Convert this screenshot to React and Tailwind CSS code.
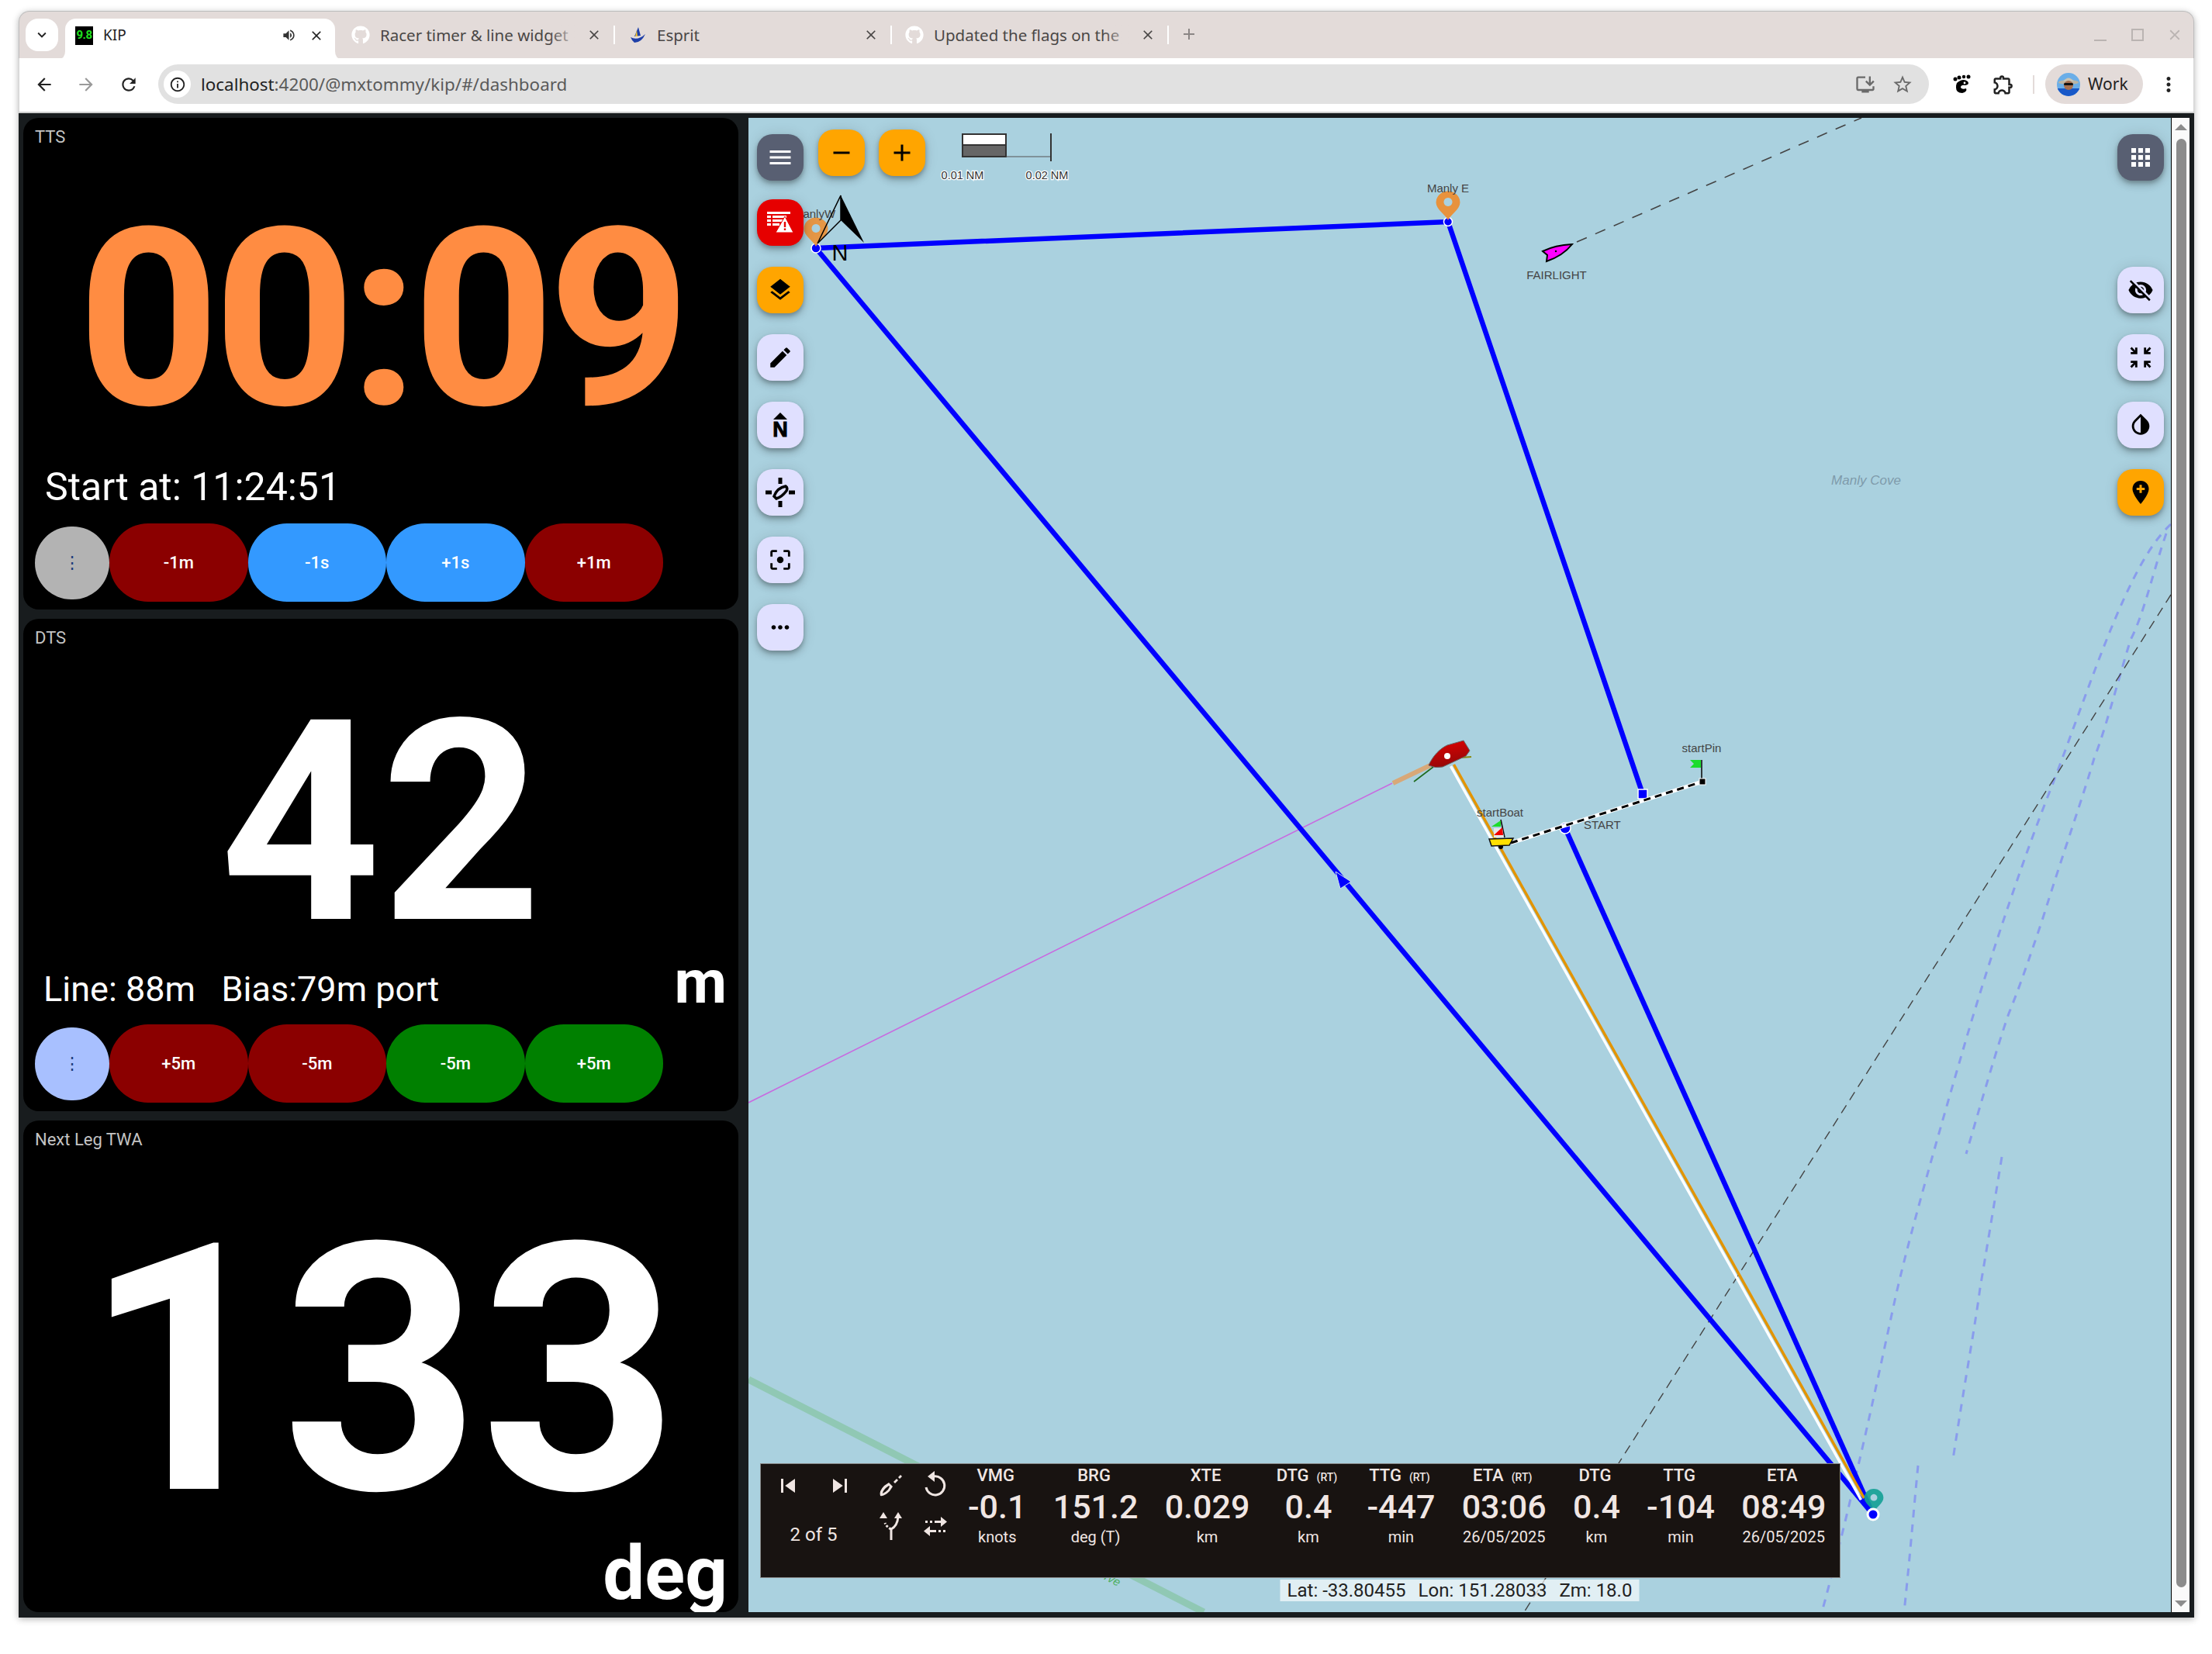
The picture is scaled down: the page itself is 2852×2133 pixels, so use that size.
import React from "react";
import {
  MdMenu, MdLayers, MdEdit, MdFilterCenterFocus, MdMoreHoriz, MdApps, MdVisibilityOff, MdZoomInMap,
  MdInvertColors, MdRemove, MdAdd, MdSkipPrevious, MdSkipNext, MdClose, MdArrowBack, MdArrowForward,
  MdRefresh, MdInfoOutline, MdStarBorder, MdInstallDesktop, MdMoreVert, MdKeyboardArrowDown, MdVolumeUp,
  MdOutlineExtension,
} from "react-icons/md";
import { FaGithub } from "react-icons/fa";

const ROBOTO = "font-['Roboto',sans-serif]";
const CHROME = "font-['Noto_Sans',sans-serif]";

function Tab({ icon, title, fade, sep = true }) {
  return (
    <div className="flex h-[51px] w-[357px] items-center pb-[9px]">
      <div className="ml-[17px] flex w-[24px] justify-center">{icon}</div>
      <div className="relative ml-[13px] w-[258px] overflow-hidden whitespace-nowrap text-[20.5px] text-[#4a4746]">
        {title}
        {fade && <div className="absolute inset-y-0 right-0 w-[40px] bg-gradient-to-r from-transparent to-[#e3dbd9]" />}
      </div>
      <MdClose className="ml-[8px] text-[#4a4746]" size={20} />
      <div className="ml-auto h-[24px] w-[2px] bg-white" style={{ visibility: sep ? "visible" : "hidden" }} />
    </div>
  );
}

function EspritIcon() {
  return (
    <svg width="24" height="24" viewBox="0 0 24 24">
      <path d="M13 2 L16 13 L8 14 Z" fill="#1f3fa8" />
      <path d="M11 6 L9 14 L12 14 Z" fill="#f2c230" />
      <path d="M3 15 Q12 20 22 11 Q17 22 8 22 Q5 20 3 15Z" fill="#1f3fa8" />
    </svg>
  );
}

function Avatar() {
  return (
    <svg width="30" height="30" viewBox="0 0 30 30" className="rounded-full">
      <rect width="30" height="30" fill="#6aaee8" />
      <rect y="20" width="30" height="10" fill="#1858c8" />
      <ellipse cx="15" cy="12" rx="13" ry="3" fill="#b9b4a4" />
      <path d="M8 11 Q15 2 22 11Z" fill="#c9c4b4" />
      <circle cx="15" cy="16" r="6" fill="#a87050" />
      <rect x="9" y="13" width="12" height="3" rx="1.5" fill="#111" />
    </svg>
  );
}

function ChromeBar() {
  return (
    <>
      <div className="relative flex h-[61px] shrink-0 items-start rounded-t-[14px] border-x border-t border-[#bdbdbd] bg-[#e3dbd9] pt-[9px]">
        <div className="ml-[8px] flex h-[42px] w-[42px] items-center justify-center rounded-[16px] bg-white">
          <MdKeyboardArrowDown size={22} className="text-[#222]" />
        </div>
        <div className="relative ml-[9px] flex h-[52px] w-[348px] items-center rounded-t-[14px] bg-white pb-[9px]">
          <svg className="absolute bottom-0 left-[-9px]" width="9" height="10" viewBox="0 0 9 10"><path d="M9 0 V10 H0 Q9 10 9 0Z" fill="#fff" /></svg>
          <svg className="absolute bottom-0 right-[-9px]" width="9" height="10" viewBox="0 0 9 10"><path d="M0 0 V10 H9 Q0 10 0 0Z" fill="#fff" /></svg>
          <div className={`ml-[13px] flex h-[24px] w-[23px] flex-col items-center justify-center bg-black text-[15px] font-bold leading-none tracking-[-0.5px] text-[#1fe01f] ${ROBOTO}`}>9.8</div>
          <span className={`ml-[13px] text-[19px] text-[#222] ${CHROME}`}>KIP</span>
          <MdVolumeUp size={19} className="ml-auto text-[#333]" />
          <MdClose size={20} className="ml-[16px] mr-[14px] text-[#222]" />
        </div>
        <div className={`ml-[4px] flex items-start ${CHROME}`}>
          <Tab icon={<FaGithub size={24} className="text-white" />} title="Racer timer & line widget" fade />
          <Tab icon={<EspritIcon />} title="Esprit" />
          <Tab icon={<FaGithub size={24} className="text-white" />} title="Updated the flags on the" fade />
        </div>
        <MdAdd size={24} className="ml-[14px] mt-[8px] text-[#8b8685]" />
        <div className="ml-auto mr-[13px] mt-[10px] flex items-center text-[#bab4b2]">
          <div className="mt-[14px] h-[2px] w-[16px] bg-[#bab4b2]" />
          <div className="ml-[32px] h-[16px] w-[16px] border-2 border-[#bab4b2]" />
          <MdClose size={22} className="ml-[29px]" />
        </div>
      </div>
      <div className="flex h-[69px] shrink-0 items-center border-x border-[#d5d5d5] bg-white pb-[2px] text-[#222]">
        <MdArrowBack size={26} className="ml-[19px]" />
        <MdArrowForward size={26} className="ml-[28px] text-[#9a9a9a]" />
        <MdRefresh size={26} className="ml-[29px]" />
        <div className={`ml-[25px] flex h-[51px] w-[2283px] items-center rounded-full bg-[#e1e1e1] ${CHROME}`}>
          <div className="ml-[7px] flex h-[35px] w-[35px] items-center justify-center rounded-full bg-white">
            <MdInfoOutline size={22} className="text-[#222]" />
          </div>
          <span className="ml-[13px] text-[22.4px] text-[#222]">localhost<span className="text-[#5a5a5a]">:4200/@mxtommy/kip/#/dashboard</span></span>
          <MdInstallDesktop size={28} className="ml-auto text-[#6a6a6a]" />
          <MdStarBorder size={28} className="ml-[20px] mr-[20px] text-[#6a6a6a]" />
        </div>
        <svg width="24" height="26" viewBox="0 0 24 26" className="ml-[30px]">
          <circle cx="4" cy="6" r="2.5" /><circle cx="9" cy="4" r="2.5" /><circle cx="15" cy="3" r="2.2" /><circle cx="21" cy="3" r="2.5" />
          <path d="M6 11 Q14 4 20 9 Q23 13 17 14 Q11 13 11 17 Q13 20 18 18 Q20 22 13 24 Q5 24 5 17 Q5 13 6 11Z" />
          <circle cx="16" cy="11" r="1.4" fill="#fff" />
        </svg>
        <MdOutlineExtension size={30} className="ml-[27px] text-[#222]" />
        <div className="ml-[23px] h-[24px] w-[2px] bg-[#e3dbd9]" />
        <div className={`ml-[14px] flex h-[51px] w-[126px] items-center rounded-full bg-[#e3dbd9] pl-[15px] ${CHROME}`}>
          <Avatar />
          <span className="ml-[10px] text-[21px] text-[#222]">Work</span>
        </div>
        <MdMoreVert size={30} className="ml-[18px] text-[#222]" />
      </div>
      <div className="h-[2px] shrink-0 bg-[#cfcfcf]" />
    </>
  );
}

function Pill({ bg, children }) {
  return (
    <div className={`flex h-[101px] w-[178.5px] shrink-0 items-center justify-center rounded-[50px] text-[22px] font-medium text-white ${bg}`}>
      {children}
    </div>
  );
}

function Dot({ bg }) {
  return (
    <div className={`flex h-[94px] w-[96px] shrink-0 items-center justify-center rounded-full text-[22px] leading-none text-[#1d3f7c] ${bg}`}>⋮</div>
  );
}

function Card({ title, children }) {
  return (
    <div className={`relative flex min-h-0 flex-1 flex-col overflow-hidden rounded-[20px] bg-black text-white ${ROBOTO}`}>
      <div className="h-[36px] shrink-0 pl-[15px] pt-[13px] text-[22px] leading-[24px] text-[#c4c4c4]">{title}</div>
      {children}
    </div>
  );
}

function LeftPanels() {
  return (
    <div className="ml-[6px] flex w-[922px] shrink-0 flex-col gap-[12px]">
      <Card title="TTS">
        <div className="flex h-[422px] shrink-0 items-center justify-center pt-[26px]">
          <span className="whitespace-nowrap text-[320px] font-bold leading-[0.78] tracking-[-8.5px] text-[#ff8c42]">00:09</span>
        </div>
        <div className="h-[36px] pl-[28px] text-[50px] leading-[36px]">Start at: 11:24:51</div>
        <div className="mb-[11px] mt-[29px] flex items-center pl-[15px]">
          <Dot bg="bg-[#b3b3b3]" />
          <Pill bg="bg-[#8b0000]">-1m</Pill>
          <Pill bg="bg-[#3399ff]">-1s</Pill>
          <Pill bg="bg-[#3399ff]">+1s</Pill>
          <Pill bg="bg-[#8b0000]">+1m</Pill>
        </div>
      </Card>
      <Card title="DTS">
        <div className="flex h-[424px] shrink-0 items-center justify-center pt-[30px]">
          <span className="text-[362px] font-bold leading-[0.78]">42</span>
        </div>
        <div className="h-[36px] whitespace-pre pl-[26px] text-[45px] leading-[36px]">Line: 88m   Bias:79m port</div>
        <div className="absolute right-[15px] top-[430px] text-[78px] font-bold leading-none">m</div>
        <div className="mb-[11px] mt-[27px] flex items-center pl-[15px]">
          <Dot bg="bg-[#a8c0ff]" />
          <Pill bg="bg-[#8b0000]">+5m</Pill>
          <Pill bg="bg-[#8b0000]">-5m</Pill>
          <Pill bg="bg-[#008000]">-5m</Pill>
          <Pill bg="bg-[#008000]">+5m</Pill>
        </div>
      </Card>
      <Card title="Next Leg TWA">
        <div className="flex h-[500px] shrink-0 items-center justify-center pt-[74px]">
          <span className="text-[446px] font-bold leading-[0.78]">133</span>
        </div>
        <div className="pr-[14px] text-right text-[96px] font-bold leading-none">deg</div>
      </Card>
    </div>
  );
}

function Pin({ x, y, color, opacity = 1 }) {
  return (
    <g transform={`translate(${x} ${y})`} opacity={opacity}>
      <path d="M0 0 C-3 -7 -15.5 -14 -15.5 -23 A15.5 14.5 0 1 1 15.5 -23 C15.5 -14 3 -7 0 0Z M0 -29 A5.5 5.5 0 1 0 0.01 -29Z" fill={color} fillRule="evenodd" />
    </g>
  );
}

function MapCanvas() {
  const label = { fontFamily: "'Liberation Sans',sans-serif", fontSize: 15, fill: "#444" };
  return (
    <svg className="absolute inset-0" width="1834" height="1927" viewBox="965 152 1834 1927">
      {/* reserve band */}
      <path d="M965 1779 L1552 2079" stroke="#90c8b4" strokeWidth="9" fill="none" />
      <text x="1392" y="2020" transform="rotate(28 1392 2020)" style={{ fontFamily: "'Liberation Sans',sans-serif", fontSize: 15, fontStyle: "italic", fill: "#4caf62" }}>Reserve</text>
      <text x="2406" y="625" textAnchor="middle" style={{ fontFamily: "'Liberation Sans',sans-serif", fontSize: 17, fontStyle: "italic", fill: "#7f9bab" }}>Manly Cove</text>

      {/* depth contours */}
      <g fill="none" stroke="#7b86f2" strokeOpacity="0.7" strokeWidth="3" strokeDasharray="10 9">
        <path d="M2799 676 C2745 725 2700 870 2647 1010 C2615 1090 2570 1220 2533 1347 C2500 1460 2460 1600 2443 1677 C2425 1760 2410 1830 2395 1894 C2380 1960 2365 2020 2349 2079" />
        <path d="M2793 688 C2775 740 2765 790 2747 825 C2730 880 2715 940 2700 978 C2685 1030 2660 1100 2633 1187 C2615 1240 2605 1270 2590 1307 C2575 1350 2555 1420 2535 1488" />
        <path d="M2581 1492 C2570 1560 2560 1620 2553 1661 C2545 1720 2535 1770 2518 1882" />
        <path d="M2473 1890 C2470 1920 2467 1955 2464 1987 C2461 2020 2458 2050 2455 2079" />
      </g>

      {/* AIS and layline vectors */}
      <path d="M2033 312 L2400 152" stroke="#444" strokeWidth="1.6" strokeDasharray="14 12" fill="none" />
      <path d="M2799 767 L1965 2079" stroke="#444" strokeWidth="1.4" strokeDasharray="12 8" fill="none" />

      {/* heading / bearing line */}
      <path d="M965 1422 L1795 1010" stroke="#c86ae0" strokeWidth="1.6" fill="none" />
      <path d="M1796 1010 L1844 987" stroke="#d8a878" strokeWidth="6" fill="none" />
      <path d="M1823 1008 L1848 989" stroke="#1e6a1e" strokeWidth="1.6" fill="none" />
      <path d="M1883 977 L1897 976" stroke="#8a8a10" strokeWidth="2" fill="none" />

      {/* route */}
      <g fill="none" stroke="#0000ff" strokeWidth="6.5">
        <path d="M1052 320 L1867 286 L2118 1024" />
        <path d="M2018 1068 L2415 1953" />
        <path d="M1052 320 L2415 1953" />
      </g>
      <path d="M1873 987 L2402 1933" stroke="#fff" strokeWidth="3.5" fill="none" transform="translate(-2.5 1.2)" />
      <path d="M1873 987 L2402 1933" stroke="#e39400" strokeWidth="3.5" fill="none" transform="translate(1.5 -1)" />
      <polygon points="1722,1124 1742,1137 1728,1146" fill="#0000ff" stroke="#cfe3ee" strokeWidth="1" />

      {/* teal pin */}
      <g transform="translate(2416 1950) scale(0.8)"><Pin x={0} y={0} color="#13a095" opacity={0.9} /></g>

      <circle cx="2018" cy="1068" r="7" fill="#0000ff" stroke="#fff" strokeWidth="1.5" />
      <rect x="2112" y="1018" width="12" height="12" fill="#0000ff" stroke="#fff" strokeWidth="1.5" />

      {/* start line */}
      <path d="M1948 1087 L2195 1008" stroke="#fff" strokeWidth="5" fill="none" />
      <path d="M1948 1087 L2195 1008" stroke="#000" strokeWidth="3" strokeDasharray="9 6" fill="none" />

      {/* pin end */}
      <path d="M2194 980 V1008" stroke="#111" strokeWidth="1.6" />
      <polygon points="2193,980 2179,980 2184,985 2179,990 2193,990" fill="#1cdc2c" />
      <rect x="2191" y="1004" width="8" height="8" fill="#000" stroke="#fff" strokeWidth="1" />
      <text x="2194" y="970" textAnchor="middle" style={label}>startPin</text>

      {/* boat end */}
      <circle cx="1935" cy="1092" r="3" fill="#000" />
      <path d="M1935 1057 L1940 1080" stroke="#111" strokeWidth="1.6" />
      <polygon points="1935,1058 1923,1066 1935,1066" fill="#1cdc2c" />
      <polygon points="1926,1068 1937,1068 1939,1080 1926,1080" fill="#e8e8e8" />
      <polygon points="1937,1067 1926,1077 1938,1077" fill="#f00000" />
      <polygon points="1920,1082 1951,1081 1946,1090 1923,1091" fill="#ffe000" stroke="#111" strokeWidth="1.5" />
      <text x="1934" y="1053" textAnchor="middle" style={label}>startBoat</text>
      <text x="2042" y="1069" style={label}>START</text>

      {/* self boat */}
      <defs>
        <linearGradient id="hull" x1="0" y1="0" x2="0.3" y2="1">
          <stop offset="0" stopColor="#e40000" />
          <stop offset="1" stopColor="#960808" />
        </linearGradient>
      </defs>
      <path d="M1842 987 C1847 975 1857 965 1866 961 L1887 955 L1895 968 L1890 975 L1860 989 Q1850 991 1842 987Z" fill="url(#hull)" stroke="#666" strokeWidth="1" />
      <circle cx="1866" cy="975" r="4" fill="#fff" />

      {/* waypoints: the marker pins sit over their route nodes */}
      <circle cx="1052" cy="320" r="6" fill="#0000ff" stroke="#fff" strokeWidth="1.5" />
      <circle cx="1867" cy="286" r="5.5" fill="#0000ff" stroke="#fff" strokeWidth="1.5" />
      <Pin x={1052} y={318} color="#e8923c" opacity={0.95} />
      <Pin x={1867} y={284} color="#e8923c" />
      <circle cx="2415" cy="1953" r="7" fill="#0000ff" stroke="#fff" strokeWidth="3" />
      <text x="1867" y="248" textAnchor="middle" style={label}>Manly E</text>
      <text x="1050" y="281" textAnchor="middle" style={label}>ManlyW</text>

      {/* AIS vessel */}
      <path d="M2027 315 Q2005 316 1989 324 L1995 329 L1994 337 Q2015 330 2027 315Z" fill="#ff00ff" stroke="#000" strokeWidth="2" />
      <circle cx="2006" cy="324" r="1.2" fill="#000" />
      <text x="2007" y="360" textAnchor="middle" style={label}>FAIRLIGHT</text>

      {/* north arrow */}
      <polygon points="1084,252 1054,314 1084,284" fill="none" stroke="#000" strokeWidth="1.5" />
      <polygon points="1084,252 1114,313 1084,284" fill="#000" />
      <text x="1083" y="336" textAnchor="middle" style={{ fontFamily: "'Liberation Sans',sans-serif", fontSize: 29, fill: "#000" }}>N</text>

      {/* scale line */}
      <rect x="1241" y="173" width="56" height="14" fill="#fff" stroke="#333" strokeWidth="2" />
      <rect x="1241" y="187" width="56" height="15" fill="#666" stroke="#333" strokeWidth="2" />
      <path d="M1297 202 H1355" stroke="#555" strokeWidth="1.2" />
      <path d="M1355 172 V208" stroke="#333" strokeWidth="2" />
      <g style={{ fontFamily: "'Liberation Sans',sans-serif", fontSize: 14.5, fill: "#333", paintOrder: "stroke", stroke: "#fff", strokeWidth: 2.5 }}>
        <text x="1241" y="231" textAnchor="middle">0.01 NM</text>
        <text x="1350" y="231" textAnchor="middle">0.02 NM</text>
      </g>
    </svg>
  );
}

const FAB_SHADOW = "shadow-[0_3px_5px_rgba(0,0,0,0.2),0_6px_10px_rgba(0,0,0,0.14),0_1px_18px_rgba(0,0,0,0.12)]";

function Fab({ bg = "bg-[#e0e0ff]", className = "", children }) {
  return (
    <div className={`flex h-[60px] w-[60px] shrink-0 items-center justify-center rounded-[20px] text-black ${FAB_SHADOW} ${bg} ${className}`}>
      {children}
    </div>
  );
}

function LeftFabs() {
  return (
    <div className="absolute left-[11px] top-[21px] flex flex-col gap-[27px]">
      <Fab bg="bg-[#585f72]" className="mb-[-3px] text-white"><MdMenu size={36} /></Fab>
      <Fab bg="bg-[#e60000]">
        <svg width="36" height="30" viewBox="0 0 36 30" fill="#fff">
          <rect x="1" y="1" width="30" height="3" />
          <rect x="1" y="6" width="5" height="3" /><rect x="8" y="6" width="18" height="3" />
          <rect x="1" y="11" width="5" height="3" /><rect x="8" y="11" width="14" height="3" />
          <rect x="1" y="16" width="5" height="3" /><rect x="8" y="16" width="9" height="3" />
          <path d="M24 7 L35 28 H12Z" stroke="#e60000" strokeWidth="1" />
          <rect x="22.8" y="14" width="2.4" height="7" fill="#e60000" />
          <rect x="22.8" y="22.5" width="2.4" height="2.4" fill="#e60000" />
        </svg>
      </Fab>
      <Fab bg="bg-[#ffa500]"><MdLayers size={34} /></Fab>
      <Fab><MdEdit size={34} /></Fab>
      <Fab>
        <svg width="36" height="36" viewBox="0 0 36 36">
          <polygon points="18,2 27,11 9,11" fill="#000" />
          <text x="18" y="33" textAnchor="middle" stroke="#000" strokeWidth="1" style={{ fontFamily: "'Liberation Sans',sans-serif", fontSize: 27, fontWeight: 700 }}>N</text>
        </svg>
      </Fab>
      <Fab>
        <svg width="40" height="40" viewBox="0 0 40 40">
          <path d="M20 1 V9 M20 31 V39 M1 20 H9 M31 20 H39" stroke="#000" strokeWidth="5" />
          <path d="M12 25 Q16 14 27 12 Q30 14 28 18 Q22 26 15 28Z" fill="#e0e0ff" stroke="#000" strokeWidth="3.5" />
        </svg>
      </Fab>
      <Fab><MdFilterCenterFocus size={34} /></Fab>
      <Fab><MdMoreHoriz size={34} /></Fab>
    </div>
  );
}

function RightFabs() {
  return (
    <div className="absolute right-[9px] top-[21px] flex flex-col gap-[27px]">
      <Fab bg="bg-[#585f72]" className="mb-[84px] text-white"><MdApps size={36} /></Fab>
      <Fab><MdVisibilityOff size={34} /></Fab>
      <Fab><MdZoomInMap size={34} /></Fab>
      <Fab><MdInvertColors size={34} /></Fab>
      <Fab bg="bg-[#ffa500]">
        <svg width="36" height="36" viewBox="0 0 24 24">
          <path d="M12 2C8 2 5 5 5 9c0 5 7 13 7 13s7-8 7-13c0-4-3-7-7-7z" fill="#000" />
          <path d="M11 5.5h2V8h2.5v2H13v2.5h-2V10H8.5V8H11z" fill="#ffa500" />
        </svg>
      </Fab>
    </div>
  );
}

function Metric({ head, rt, value, unit }) {
  return (
    <div className="flex shrink-0 flex-col items-center">
      <div className="flex h-[28px] items-baseline whitespace-nowrap pr-[4px] pt-[2px] text-[22px] font-medium leading-[26px]">
        {head}
        {rt && <span className="ml-[10px] text-[14px]">(RT)</span>}
      </div>
      <div className="mt-[5px] text-[43px] font-medium leading-[44px]">{value}</div>
      <div className="mt-[4px] text-[20px] leading-[26px]">{unit}</div>
    </div>
  );
}

function RoutePanel() {
  return (
    <div className={`absolute left-[15px] top-[1735px] flex h-[148px] w-[1393px] border border-[#888] bg-[#181311] text-[#f0e6e3] ${ROBOTO}`}>
      <div className="flex w-[136px] shrink-0 flex-col items-center pt-[10px]">
        <div className="flex gap-[31px]">
          <MdSkipPrevious size={36} />
          <MdSkipNext size={36} />
        </div>
        <div className="mt-[31px] text-[24px] leading-[28px]">2 of 5</div>
      </div>
      <div className="grid h-[110px] w-[131px] shrink-0 grid-cols-[57px_57px] grid-rows-[54px_54px] items-center justify-items-center pl-[3px]">
        <svg width="36" height="36" viewBox="0 0 36 36" fill="#f0e6e3">
          <path d="M4 32 Q2 26 9 19 L15 15 L20 20 L16 26 Q9 33 4 32Z M7 29 Q10 28 14 24 L16 20 L15 19 L11 22 Q7 26 7 29Z" fillRule="evenodd" />
          <path d="M21 14 L25 10 L27 12 L23 16Z M27 8 L30 5 L32 7 L29 10Z" />
        </svg>
        <svg width="34" height="40" viewBox="0 0 34 40" fill="none" stroke="#f0e6e3" strokeWidth="3">
          <path d="M15 9 A12 12 0 1 1 5 23" />
          <polygon points="16,2 16,16 7,9" fill="#f0e6e3" stroke="none" />
        </svg>
        <svg width="30" height="38" viewBox="0 0 30 38" fill="none" stroke="#f0e6e3" strokeWidth="3">
          <path d="M15 36 V22 Q23 18 24 6" />
          <path d="M15 22 Q9 19 7 14" strokeDasharray="3 2" />
          <polygon points="24,0 29,8 19,8" fill="#f0e6e3" stroke="none" />
          <polygon points="5,0 10,8 0,8" fill="#f0e6e3" stroke="none" />
        </svg>
        <svg width="32" height="30" viewBox="0 0 32 30" fill="#f0e6e3">
          <rect x="3" y="7" width="3" height="3" /><rect x="9" y="7" width="3" height="3" /><path d="M15 7 H23 V2 L31 8.5 L23 15 V10 H15Z" />
          <path d="M17 19 H9 V14 L1 20.5 L9 27 V22 H17Z" /><rect x="20" y="19" width="3" height="3" /><rect x="26" y="19" width="3" height="3" />
        </svg>
      </div>
      <div className="flex items-start gap-[34.25px]">
        <Metric head="VMG" value="-0.1" unit="knots" />
        <Metric head="BRG" value="151.2" unit="deg (T)" />
        <Metric head="XTE" value="0.029" unit="km" />
        <Metric head="DTG" rt value="0.4" unit="km" />
        <Metric head="TTG" rt value="-447" unit="min" />
        <Metric head="ETA" rt value="03:06" unit="26/05/2025" />
        <Metric head="DTG" value="0.4" unit="km" />
        <Metric head="TTG" value="-104" unit="min" />
        <Metric head="ETA" value="08:49" unit="26/05/2025" />
      </div>
    </div>
  );
}

function CoordBar() {
  return (
    <div className={`absolute bottom-[14px] left-1/2 flex h-[28px] w-[463px] -translate-x-1/2 items-center justify-center gap-[16px] whitespace-nowrap bg-white/65 text-[24px] leading-none text-[#222] ${ROBOTO}`}>
      <span>Lat: -33.80455</span>
      <span>Lon: 151.28033</span>
      <span>Zm: 18.0</span>
    </div>
  );
}

function Scrollbar() {
  return (
    <div className="flex w-[24px] shrink-0 flex-col items-center border-l border-black bg-[#fafafa]">
      <div className="mt-[8px] h-0 w-0 border-x-[8px] border-b-[8px] border-x-transparent border-b-[#8c8c8c]" />
      <div className="ml-[1px] mt-[11px] w-[13px] flex-1 rounded-full bg-[#8c8c8c]" />
      <div className="mb-[7px] mt-[17px] h-0 w-0 border-x-[8px] border-t-[8px] border-x-transparent border-t-[#8c8c8c]" />
    </div>
  );
}

export default function App() {
  return (
    <div className="h-[2133px] w-[2852px] bg-white pl-[24px] pt-[14px]">
      <div className="flex h-[2072px] w-[2805px] flex-col rounded-t-[14px] shadow-[0_2px_8px_rgba(0,0,0,0.3)]">
        <ChromeBar />
        <div className="flex min-h-0 flex-1 bg-[#181c1e] pb-[7px] pt-[6px]">
          <LeftPanels />
          <div className="relative ml-[13px] w-[1834px] shrink-0 overflow-hidden bg-[#aad1df]">
            <MapCanvas />
            <LeftFabs />
            <div className="absolute left-[90px] top-[15px] flex gap-[18px]">
              <Fab bg="bg-[#ffa500]"><MdRemove size={36} /></Fab>
              <Fab bg="bg-[#ffa500]"><MdAdd size={36} /></Fab>
            </div>
            <RightFabs />
            <RoutePanel />
            <CoordBar />
          </div>
          <Scrollbar />
        </div>
      </div>
    </div>
  );
}
